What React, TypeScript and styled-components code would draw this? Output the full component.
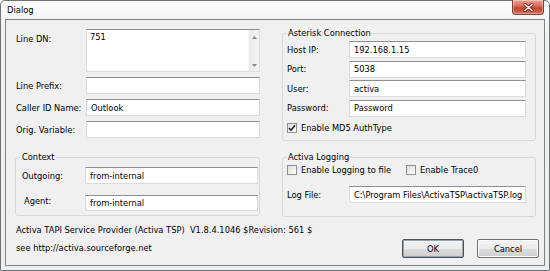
import React from "react";
import styled, { createGlobalStyle } from "styled-components";

const Global = createGlobalStyle`
  html, body { margin: 0; padding: 0; background: #ffffff; }
  body { font-family: "DejaVu Sans", Verdana, sans-serif; font-size: 8.3px; color: #000; }
  * { box-sizing: border-box; }
`;

const Window = styled.div`
  width: 550px;
  height: 271px;
  display: flex;
  flex-direction: column;
  padding: 0 4px 4px 4px;
  border: 1px solid #6e7276;
  border-radius: 5px 5px 1px 1px;
  background: linear-gradient(#fbfbfb, #f1f1f1 30px, #eeeeee);
`;

const TitleBar = styled.div`
  height: 18px;
  display: flex;
  align-items: flex-start;
  justify-content: space-between;
`;

const Title = styled.span`
  padding: 4px 0 0 2px;
  line-height: 10px;
  font-size: 8.4px;
`;

const CloseButton = styled.div`
  width: 32px;
  height: 15px;
  margin: -1px 1px 0 0;
  display: flex;
  align-items: center;
  justify-content: center;
  border: 1px solid #8a3b30;
  border-top: none;
  border-radius: 0 0 4px 4px;
  background: linear-gradient(#e7a597, #d66a55 45%, #c4442d 55%, #d0705a);
  box-shadow: inset 0 0 0 1px rgba(255, 255, 255, 0.35);
`;

const Client = styled.div`
  flex: 1;
  display: flex;
  flex-direction: column;
  border: 1px solid #7f8287;
  background: #f0f0f0;
`;

const Columns = styled.div`
  display: flex;
  gap: 22px;
  padding: 0 8px 0 9px;
`;

const LeftCol = styled.div`
  width: 245px;
  display: flex;
  flex-direction: column;
  padding-top: 9px;
`;

const RightCol = styled.div`
  flex: 1;
  display: flex;
  flex-direction: column;
  padding-top: 8px;
  gap: 11px;
`;

const FormGrid = styled.div<{ $label: number; $field: number; $gap: number; $pad?: string }>`
  display: grid;
  grid-template-columns: ${(p) => p.$label}px ${(p) => p.$field}px;
  row-gap: ${(p) => p.$gap}px;
  align-items: center;
  padding: ${(p) => p.$pad || "0"};
`;

const Label = styled.span<{ $top?: boolean; $shift?: number; $lift?: number }>`
  align-self: ${(p) => (p.$top ? "start" : "center")};
  padding-top: ${(p) => (p.$top ? 5 : 0)}px;
  padding-left: ${(p) => p.$shift || 0}px;
  margin-top: ${(p) => -(p.$lift || 0)}px;
  line-height: 10px;
  white-space: nowrap;
`;

const Edit = styled.div<{ $h?: number }>`
  height: ${(p) => p.$h || 17}px;
  display: flex;
  align-items: center;
  padding-left: 4px;
  background: #ffffff;
  border: 1px solid #dadce1;
  border-top-color: #8d8f94;
  line-height: 10px;
  white-space: nowrap;
  overflow: hidden;
`;

const MultiEdit = styled.div`
  height: 43px;
  display: flex;
  background: #ffffff;
  border: 1px solid #dadce1;
  border-top-color: #8d8f94;
`;

const MultiText = styled.div`
  flex: 1;
  padding: 2px 0 0 3px;
  line-height: 10px;
`;

const ScrollBar = styled.div`
  width: 11px;
  display: flex;
  flex-direction: column;
  justify-content: space-between;
  align-items: center;
  padding: 6px 0 4px;
  background: linear-gradient(90deg, #eaeaea, #f4f4f4);
  border-left: 1px solid #f6f6f6;
`;

const GroupBox = styled.fieldset<{ $pad: string }>`
  margin: 0;
  min-width: 0;
  padding: ${(p) => p.$pad};
  border: 1px solid #d5d9de;
  border-radius: 3px;
`;

const Legend = styled.legend`
  margin: 0;
  padding: 0 1px;
  line-height: 10px;
`;

const ContextBox = styled(GroupBox)`
  margin-top: 14px;
`;

const CheckRow = styled.label<{ $cols?: string }>`
  display: grid;
  grid-template-columns: ${(p) => p.$cols || "auto"};
  align-items: center;
  line-height: 10px;
`;

const CheckItem = styled.span`
  display: flex;
  align-items: center;
  gap: 4px;
  white-space: nowrap;
`;

const Box = styled.span`
  width: 10px;
  height: 10px;
  display: flex;
  align-items: center;
  justify-content: center;
  border: 1px solid #8e8f8f;
  background: linear-gradient(135deg, #dcdcdc, #ffffff);
`;

const SpanRow = styled.div<{ $mt?: number }>`
  grid-column: 1 / span 2;
  margin-top: ${(p) => p.$mt ?? 0}px;
`;

const Footer = styled.div`
  display: flex;
  justify-content: space-between;
  padding: 8px 5px 0 10px;
`;

const FooterText = styled.div`
  display: flex;
  flex-direction: column;
  gap: 8px;
  line-height: 10px;
  white-space: pre;
`;

const Buttons = styled.div`
  display: flex;
  gap: 13px;
  margin-top: 14px;
`;

const Button = styled.div<{ $default?: boolean }>`
  width: 62px;
  height: 19px;
  display: flex;
  align-items: center;
  justify-content: center;
  border: 1px solid ${(p) => (p.$default ? "#4f5257" : "#707070")};
  border-radius: 2px;
  background: linear-gradient(#f3f3f3, #ebebeb 50%, #dddddd 50%, #cfcfcf);
  box-shadow: inset 0 0 0 1px ${(p) => (p.$default ? "#9aa2ab" : "#fbfbfb")};
  line-height: 10px;
`;

const Check = () => (
  <svg width="8" height="8" viewBox="0 0 8 8">
    <path d="M1 4 L3 6.2 L7 1.2" fill="none" stroke="#2b2b2b" strokeWidth="1.6" />
  </svg>
);

const Arrow = ({ up }: { up?: boolean }) => (
  <svg width="5" height="3" viewBox="0 0 5 3">
    <path d={up ? "M0 3 L2.5 0 L5 3 Z" : "M0 0 L2.5 3 L5 0 Z"} fill="#8a8a8a" />
  </svg>
);

const CloseGlyph = () => (
  <svg width="11" height="9" viewBox="0 0 11 9">
    <path d="M2 1.5 L9 7.5 M9 1.5 L2 7.5" stroke="#6b2a22" strokeWidth="3" strokeLinecap="round" />
    <path d="M2 1.5 L9 7.5 M9 1.5 L2 7.5" stroke="#ffffff" strokeWidth="1.6" strokeLinecap="round" />
  </svg>
);

export default function App() {
  return (
    <>
      <Global />
      <Window>
        <TitleBar>
          <Title>Dialog</Title>
          <CloseButton>
            <CloseGlyph />
          </CloseButton>
        </TitleBar>
        <Client>
          <Columns>
            <LeftCol>
              <FormGrid $label={70} $field={174} $gap={5} $pad="0 0 0 1px">
                <Label $top>Line DN:</Label>
                <MultiEdit>
                  <MultiText>751</MultiText>
                  <ScrollBar>
                    <Arrow up />
                    <Arrow />
                  </ScrollBar>
                </MultiEdit>
                <Label>Line Prefix:</Label>
                <Edit />
                <Label>Caller ID Name:</Label>
                <Edit>Outlook</Edit>
                <Label>Orig. Variable:</Label>
                <Edit />
              </FormGrid>
              <ContextBox $pad="5px 0 4px 5px">
                <Legend>Context</Legend>
                <FormGrid $label={63} $field={173} $gap={11} $pad="0 0 0 1px">
                  <Label>Outgoing:</Label>
                  <Edit>from-internal</Edit>
                  <Label $shift={2} $lift={4}>Agent:</Label>
                  <Edit $h={16}>from-internal</Edit>
                </FormGrid>
              </ContextBox>
            </LeftCol>
            <RightCol>
              <GroupBox $pad="3px 6px 7px 4px">
                <Legend>Asterisk Connection</Legend>
                <FormGrid $label={62} $field={177} $gap={2.5}>
                  <Label>Host IP:</Label>
                  <Edit>192.168.1.15</Edit>
                  <Label>Port:</Label>
                  <Edit>5038</Edit>
                  <Label>User:</Label>
                  <Edit>activa</Edit>
                  <Label>Password:</Label>
                  <Edit>Password</Edit>
                  <SpanRow $mt={4}>
                    <CheckRow>
                      <CheckItem>
                        <Box>
                          <Check />
                        </Box>
                        Enable MD5 AuthType
                      </CheckItem>
                    </CheckRow>
                  </SpanRow>
                </FormGrid>
              </GroupBox>
              <GroupBox $pad="3px 6px 13px 4px">
                <Legend>Activa Logging</Legend>
                <FormGrid $label={62} $field={177} $gap={11}>
                  <SpanRow>
                    <CheckRow $cols="119px auto">
                      <CheckItem>
                        <Box />
                        Enable Logging to file
                      </CheckItem>
                      <CheckItem>
                        <Box />
                        Enable Trace0
                      </CheckItem>
                    </CheckRow>
                  </SpanRow>
                  <Label>Log File:</Label>
                  <Edit>C:\Program Files\ActivaTSP\activaTSP.log</Edit>
                </FormGrid>
              </GroupBox>
            </RightCol>
          </Columns>
          <Footer>
            <FooterText>
              <span>Activa TAPI Service Provider (Activa TSP)  V1.8.4.1046 $Revision: 561 $</span>
              <span>see http://activa.sourceforge.net</span>
            </FooterText>
            <Buttons>
              <Button $default>OK</Button>
              <Button>Cancel</Button>
            </Buttons>
          </Footer>
        </Client>
      </Window>
    </>
  );
}
